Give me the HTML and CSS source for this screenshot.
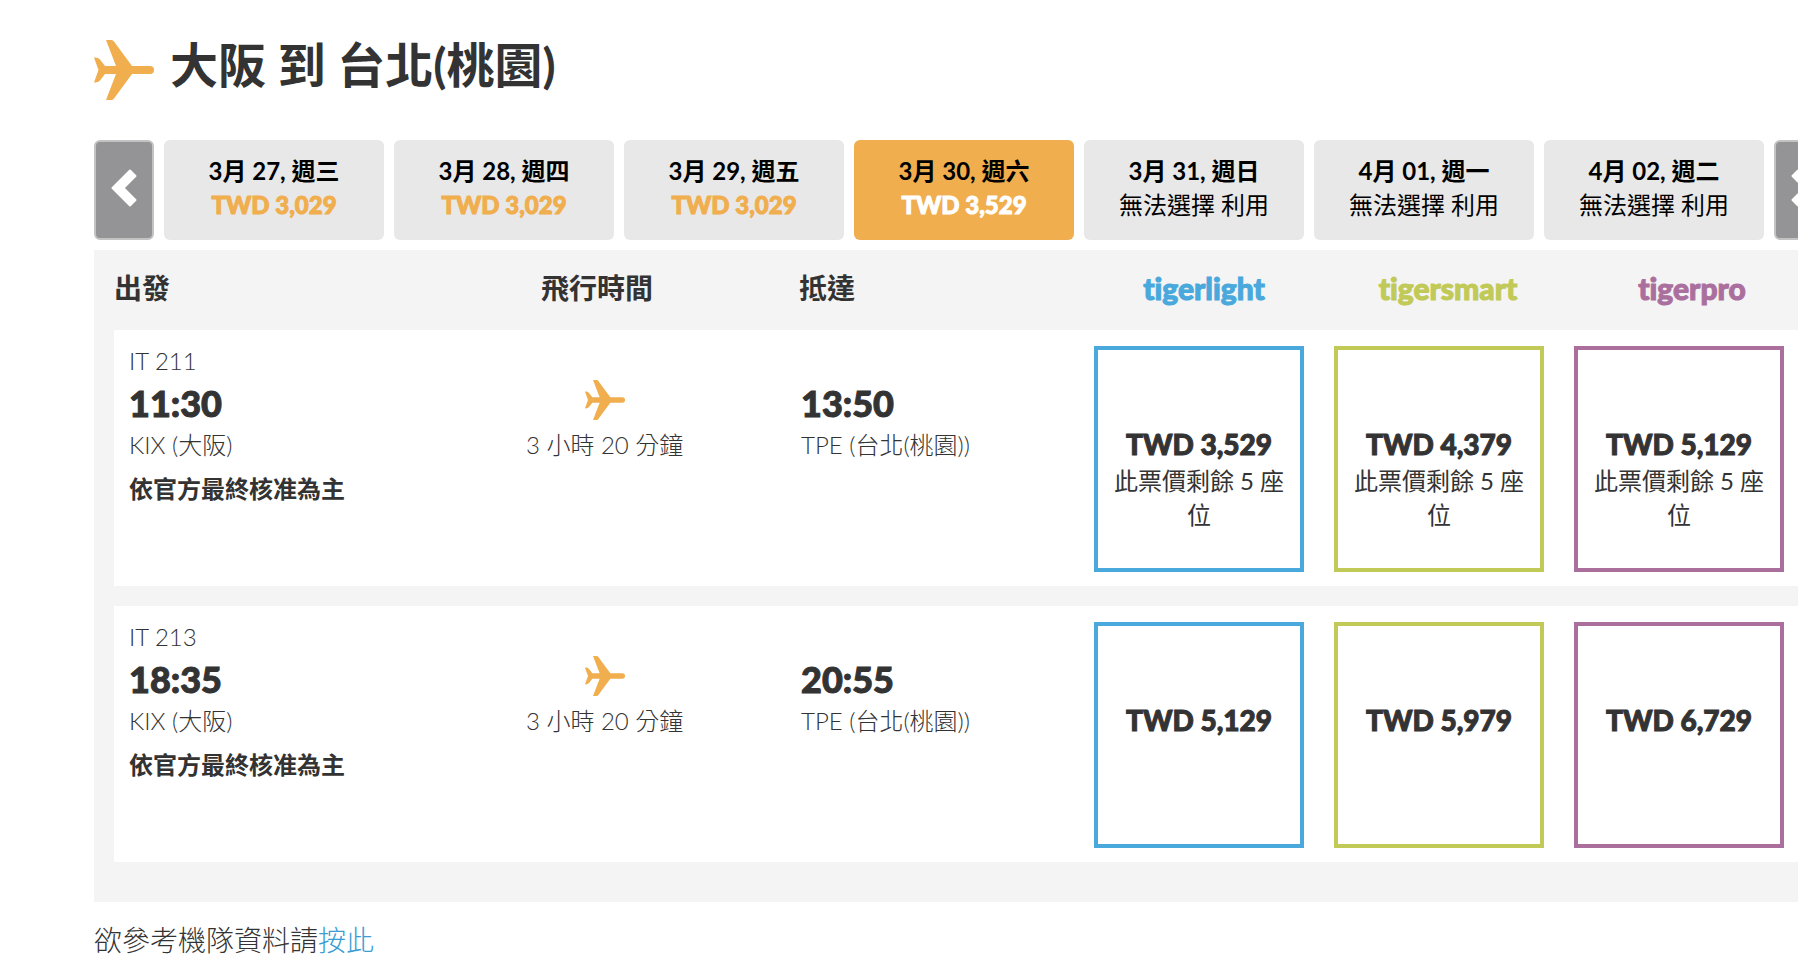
FILE: index.html
```html
<!DOCTYPE html>
<html lang="zh-Hant">
<head>
  <meta charset="UTF-8" />
  <meta name="viewport" content="width=device-width, initial-scale=1.0" />
  <title>大阪 到 台北(桃園)</title>
  <link rel="stylesheet" href="styles.css">
</head>
<body>
  <svg class="sprite" aria-hidden="true">
    <symbol id="plane" viewBox="0 0 60 60">
      <path d="M12 0h5.500q1.500 0 2.500 1.500L38 26h18a4 4 0 0 1 0 8H38L20 58.500q-1 1.500-2.500 1.500H12L22 34H11L6 40.500Q4 43 0 42.500L4.500 30 0 17.500Q4 17 6 19.500L11 26h11z"/>
    </symbol>
  </svg>

  <main class="flights">
    <h1 class="route">
      <svg class="route-icon"><use href="#plane"/></svg>
      <span>大阪 到 台北(桃園)</span>
    </h1>

    <div class="dates">
      <button class="arrow" aria-label="前一週"><svg viewBox="0 0 26 38"><path d="M19 1.500 24.500 7 12.500 19l12 12-5.500 5.500L1.500 19z"/></svg></button>
      <button class="date"><b>3月 27, 週三</b><span class="price">TWD 3,029</span></button>
      <button class="date"><b>3月 28, 週四</b><span class="price">TWD 3,029</span></button>
      <button class="date"><b>3月 29, 週五</b><span class="price">TWD 3,029</span></button>
      <button class="date active"><b>3月 30, 週六</b><span class="price">TWD 3,529</span></button>
      <button class="date"><b>3月 31, 週日</b><span>無法選擇 利用</span></button>
      <button class="date"><b>4月 01, 週一</b><span>無法選擇 利用</span></button>
      <button class="date"><b>4月 02, 週二</b><span>無法選擇 利用</span></button>
      <button class="arrow" aria-label="後一週"><svg viewBox="0 0 26 38"><path d="M7 1.500 1.500 7l12 12-12 12L7 36.500 24.500 19z"/></svg></button>
    </div>

    <table class="results">
      <thead>
        <tr>
          <th>出發</th>
          <th>飛行時間</th>
          <th>抵達</th>
          <th class="light">tigerlight</th>
          <th class="smart">tigersmart</th>
          <th class="pro">tigerpro</th>
        </tr>
      </thead>
      <tbody>
        <tr>
          <td>
            <div>IT 211</div>
            <div class="time">11:30</div>
            <div>KIX (大阪)</div>
            <div class="notice">依官方最終核准為主</div>
          </td>
          <td>
            <div class="duration"><svg class="duration-icon"><use href="#plane"/></svg>3 小時 20 分鐘</div>
          </td>
          <td class="arrival">
            <div class="time">13:50</div>
            <div>TPE (台北(桃園))</div>
          </td>
          <td><button class="fare light"><b>TWD 3,529</b>此票價剩餘 5 座位</button></td>
          <td><button class="fare smart"><b>TWD 4,379</b>此票價剩餘 5 座位</button></td>
          <td><button class="fare pro"><b>TWD 5,129</b>此票價剩餘 5 座位</button></td>
        </tr>
        <tr>
          <td>
            <div>IT 213</div>
            <div class="time">18:35</div>
            <div>KIX (大阪)</div>
            <div class="notice">依官方最終核准為主</div>
          </td>
          <td>
            <div class="duration"><svg class="duration-icon"><use href="#plane"/></svg>3 小時 20 分鐘</div>
          </td>
          <td class="arrival">
            <div class="time">20:55</div>
            <div>TPE (台北(桃園))</div>
          </td>
          <td><button class="fare light"><b>TWD 5,129</b></button></td>
          <td><button class="fare smart"><b>TWD 5,979</b></button></td>
          <td><button class="fare pro"><b>TWD 6,729</b></button></td>
        </tr>
      </tbody>
    </table>

    <p class="fleet">欲參考機隊資料請<a href="#">按此</a></p>
  </main>
</body>
</html>
```
FILE: styles.css
```css
* {
  box-sizing: border-box;
}
body {
  margin: 0;
  overflow-x: hidden;
  background: #fff;
  color: #333;
  font-family: Lato, "Noto Sans CJK TC", sans-serif;
  font-size: 24px;
  font-weight: 300;
  font-variant-ligatures: none;
  line-height: 34px;
}
button {
  font: inherit;
  color: inherit;
  cursor: pointer;
}
.sprite {
  display: none;
}
.flights {
  min-width: 1740px;
  margin: 0 0 0 94px;
  padding-top: 30px;
}
.route {
  display: flex;
  align-items: center;
  gap: 16px;
  height: 80px;
  margin: 0 0 30px;
  font-size: 48px;
  font-weight: 700;
  line-height: 60px;
}
.route span {
  padding-bottom: 10px;
}
.route-icon {
  width: 60px;
  height: 60px;
  fill: #f0ae4e;
}

/* date strip */
.dates {
  display: flex;
  gap: 10px;
  height: 100px;
}
.date {
  flex: 1;
  padding: 0 0 4px;
  border: 0;
  border-radius: 6px;
  background: #e8e8e8;
  color: #000;
  font-weight: 400;
}
.date b,
.date span {
  display: block;
}
.date b {
  font-weight: 700;
}
.date .price {
  color: #f0ae4e;
  font-weight: 900;
  -webkit-text-stroke: 1px;
}
.date.active {
  background: #f0ae4e;
}
.date.active .price {
  color: #fff;
}
.arrow {
  display: flex;
  align-items: center;
  justify-content: center;
  width: 60px;
  padding: 0 0 4px;
  border: 2px solid #c3c3c3;
  border-radius: 6px;
  background: #949496;
}
.arrow svg {
  width: 26px;
  height: 38px;
  fill: #fff;
  stroke: #fff;
  stroke-width: 2;
  stroke-linejoin: round;
}

/* flight list */
.results {
  display: block;
  margin-top: 10px;
  padding: 0 20px 40px;
  background: #f4f4f4;
}
.results thead,
.results tbody {
  display: grid;
  gap: 20px;
}
.results tr {
  display: grid;
}
.results thead tr {
  grid-template-columns: 427fr 258fr 283fr 244fr 244fr 244fr;
  height: 80px;
  font-size: 28px;
  line-height: 76px;
}
.results th {
  padding: 0;
  text-align: left;
  font-weight: 700;
}
.results th.light,
.results th.smart,
.results th.pro {
  text-align: center;
  font-size: 30px;
  font-weight: 900;
  -webkit-text-stroke: 1px;
}
.results tbody tr {
  grid-template-columns: 397fr 275fr 293fr 240fr 240fr 240fr;
  padding: 14px 15px 14px 0;
  background: #fff;
}
.results td {
  padding: 0 15px;
}
.time {
  font-size: 36px;
  font-weight: 900;
  line-height: 50px;
  -webkit-text-stroke: 1px;
}
.notice {
  margin-top: 10px;
  font-weight: 700;
}
.duration {
  width: fit-content;
  padding-top: 36px;
  text-align: center;
}
.duration-icon {
  display: block;
  width: 40px;
  height: 40px;
  margin: 0 auto 8px;
  fill: #f0ae4e;
}
.results .arrival {
  padding-top: 34px;
}
.light {
  color: #49a8dc;
}
.smart {
  color: #c1c957;
}
.pro {
  color: #ab6f9e;
}
.fare {
  display: flex;
  flex-direction: column;
  align-items: center;
  justify-content: flex-start;
  width: 100%;
  height: 226px;
  margin: 2px 0 0;
  padding: 74px 12px 0;
  border: 4px solid;
  background: #fff;
  color: #333;
  font-weight: 400;
}
.fare b {
  font-size: 28px;
  font-weight: 900;
  line-height: 40px;
  -webkit-text-stroke: 1px;
}
.fare.light {
  border-color: #49a8dc;
}
.fare.smart {
  border-color: #c1c957;
}
.fare.pro {
  border-color: #ab6f9e;
}

.fleet {
  margin: 0;
  padding: 18px 0;
  font-size: 28px;
  line-height: 40px;
}
.fleet a {
  color: #3d9cd2;
  text-decoration: none;
}
```
